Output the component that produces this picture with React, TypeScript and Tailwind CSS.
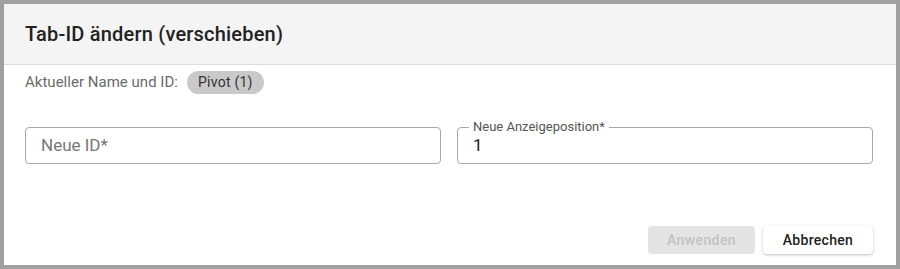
export default function App() {
  return (
    <div
      className="w-[900px] h-[269px] bg-[#a0a0a0] p-1"
      style={{ fontFamily: "Roboto, 'Liberation Sans', sans-serif" }}
    >
      <div className="flex h-full flex-col bg-white">
        {/* Header */}
        <div className="flex h-[61px] items-center border-b border-[#dcdcdc] bg-[#f4f4f4] px-[21px]">
          <h2 className="text-[20px] font-medium tracking-[0.2px] text-[#222]">Tab-ID ändern (verschieben)</h2>
        </div>

        {/* Current name */}
        <div className="mt-[6px] flex items-center gap-[9px] px-[21px]">
          <span className="text-[15px] tracking-[0.02px] text-[#6b6b6b]">Aktueller Name und ID:</span>
          <span className="flex h-[23px] items-center rounded-full bg-[#c9c9c9] px-[11px] text-[14px] tracking-[0.25px] text-[#333]">
            Pivot (1)
          </span>
        </div>

        {/* Fields */}
        <div className="mt-[33px] grid grid-cols-2 gap-4 pl-[21px] pr-[23px]">
          <div className="flex h-[37px] items-center rounded-[4px] border border-[#a8a8a8] px-[15px]">
            <span className="text-[17px] text-[#777]">Neue ID*</span>
          </div>
          <div className="relative flex h-[37px] items-center rounded-[4px] border border-[#a8a8a8] px-[15px] pt-[1px]">
            <span className="absolute left-[11px] top-[-9px] bg-white px-[4px] text-[13px] leading-[16px] text-[#555]">
              Neue Anzeigeposition*
            </span>
            <span className="text-[17px] text-[#222]">1</span>
          </div>
        </div>

        {/* Actions */}
        <div className="mt-auto mb-[11px] flex justify-end gap-2 px-[23px]">
          <button className="h-[28px] w-[107px] rounded-[4px] bg-[#e4e4e4] text-[14px] font-medium tracking-[0.4px] text-[#c2c2c2]">
            Anwenden
          </button>
          <button className="h-[28px] w-[110px] rounded-[4px] bg-white text-[14px] font-medium tracking-[0.3px] text-[#222] shadow-[0_1px_3px_rgba(0,0,0,0.25)]">
            Abbrechen
          </button>
        </div>
      </div>
    </div>
  );
}
